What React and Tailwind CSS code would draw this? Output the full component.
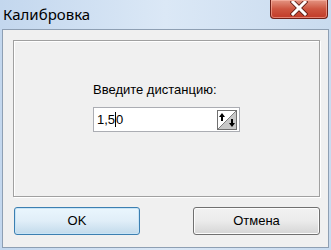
import React from "react";

function SpinIcon() {
  return (
    <svg width="20" height="20" viewBox="0 0 20 20" className="block">
      <rect x="0.5" y="0.5" width="19" height="19" fill="#ffffff" stroke="#707070" />
      <polygon points="19,1 19,19 1,19" fill="#c8c8c8" />
      <line x1="19" y1="1" x2="1" y2="19" stroke="#808080" strokeWidth="1" />
      <polygon points="5,3 8,7 2,7" fill="#000" />
      <rect x="4" y="7" width="2" height="4" fill="#000" />
      <polygon points="15,17 12,13 18,13" fill="#000" />
      <rect x="14" y="9" width="2" height="4" fill="#000" />
    </svg>
  );
}

export default function App() {
  return (
    <div
      className="w-[331px] h-[250px] flex flex-col bg-gradient-to-r from-[#c3d7ee] via-[#dbe8f6] to-[#c9dbef] overflow-hidden"
      style={{ fontFamily: '"Liberation Sans", Arial, sans-serif' }}
    >
      <div className="h-[29px] flex items-start justify-between shrink-0">
        <div
          className="pl-[3px] pt-[5px] text-[15px] leading-[18px] text-black"
          style={{ fontFamily: '"Noto Sans", "Open Sans", sans-serif' }}
        >
          Калибровка
        </div>
        <div className="mr-[3px] w-[58px] h-[19px] rounded-b-[4px] border border-t-0 border-[#6e2018] bg-gradient-to-b from-[#e39482] via-[#cd5540] to-[#c13a28] flex items-start justify-center shadow-[inset_0_0_0_1px_rgba(255,190,175,0.55)]">
          <svg width="18" height="15" viewBox="0 0 18 15" className="mt-[1px]">
            <path d="M3 1 L15 13 M15 1 L3 13" stroke="#5a1a12" strokeWidth="4.6" strokeLinecap="square" />
            <path d="M3 1 L15 13 M15 1 L3 13" stroke="#ffffff" strokeWidth="3" strokeLinecap="square" />
          </svg>
        </div>
      </div>
      <div className="mx-[2px] mb-[2px] flex-1 border border-[#8e9fb3] bg-[#f0f0f0] flex flex-col pt-[10px] pl-[10px] pr-[8px]">
        <div className="h-[157px] border border-[#a0a0a0] shadow-[inset_1px_1px_0_#ffffff,1px_1px_0_#ffffff] flex flex-col items-start pl-[79px] pt-[41px]">
          <div className="text-[13px] leading-[16px] text-black">Введите дистанцию:</div>
          <div className="mt-[9px] w-[147px] h-[25px] border border-[#abadb3] bg-white flex items-center justify-between pl-[3px] pr-[2px]">
            <div className="text-[13px] leading-[16px] text-black flex items-center">
              1,5<span className="inline-block w-[1px] h-[15px] bg-black" />0
            </div>
            <SpinIcon />
          </div>
        </div>
        <div className="mt-[10px] flex justify-between pl-px">
          <div className="w-[126px] h-[28px] rounded-[3px] border border-[#3c7fb1] bg-gradient-to-b from-[#eaf6fd] via-[#e0eef8] to-[#c2daeb] shadow-[inset_0_0_0_1px_#c8e4f6] flex items-center justify-center text-[13px] text-black">
            OK
          </div>
          <div className="w-[127px] h-[28px] rounded-[3px] border border-[#707070] bg-gradient-to-b from-[#f2f2f2] via-[#ebebeb] to-[#d5d5d5] shadow-[inset_0_0_0_1px_#fcfcfc] flex items-center justify-center text-[13px] text-black">
            Отмена
          </div>
        </div>
      </div>
    </div>
  );
}
